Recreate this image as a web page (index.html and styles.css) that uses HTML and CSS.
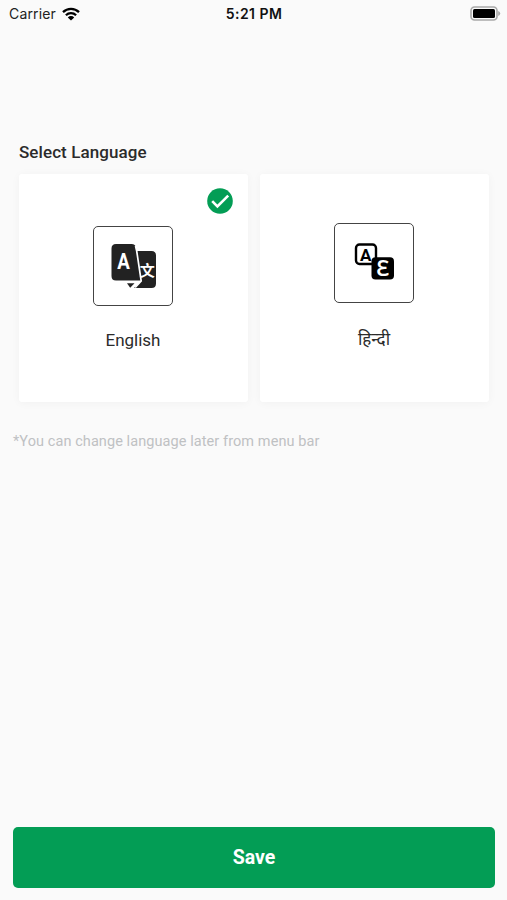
FILE: index.html
```html
<!DOCTYPE html>
<html lang="en">
<head>
    <meta charset="UTF-8">
    <meta name="viewport" content="width=device-width, initial-scale=1.0">
    <title>Select Language</title>
    <link rel="stylesheet" href="styles.css">
</head>
<body>
    <div class="screen">
        <header class="status-bar">
            <div class="carrier">
                <span>Carrier</span>
                <svg class="wifi" viewBox="0 0 18 14" width="18" height="14">
                    <path d="M1 5.2a11.5 11.5 0 0 1 16 0M3.9 8.2a7.3 7.3 0 0 1 10.2 0" fill="none" stroke="#000" stroke-width="2.3"/>
                    <path d="M9 13.6L5.8 10.4a4.5 4.5 0 0 1 6.4 0z"/>
                </svg>
            </div>
            <span class="time">5:21 PM</span>
            <svg class="battery" viewBox="0 0 31 15" width="31" height="15">
                <rect x="1" y="1" width="26" height="13" rx="3.5" fill="#fafafa" stroke="#a9a9a9" stroke-width="1.6"/>
                <rect x="3" y="3" width="22" height="9" rx="1.5"/>
                <path d="M28.2 5v5q2-.8 2-2.500t-2-2.500z" fill="#a9a9a9"/>
            </svg>
        </header>

        <main class="content">
            <h2>Select Language</h2>
            <div class="languages">
                <div class="card">
                    <svg class="check" viewBox="0 0 26 26" width="26" height="26">
                        <circle cx="13" cy="13" r="12.800" fill="#039d55"/>
                        <path d="M5.200 13.200l5.200 5.200L21.200 7.600" fill="none" stroke="#fff" stroke-width="2.600"/>
                    </svg>
                    <div class="icon-box">
                        <svg viewBox="0 0 80 80" width="80" height="80">
                            <path d="M43 25h15.500q4.500 0 4.500 4.500v28q0 4.500-4.500 4.500H41l7-7z" fill="#222"/>
                            <path d="M23 18h15.500q4 0 4.600 4l4.900 32.500H23q-4.500 0-4.500-4.500V22.500q0-4.500 4.500-4.500z" fill="#222"/>
                            <path d="M42.500 20l1.200 5 4.500 30-6 6.500" fill="none" stroke="#fff" stroke-width="1.700"/>
                            <path d="M34 57.300h7.500l-4.300 4.400z" fill="#222"/>
                            <text transform="translate(30.500 42.500) scale(.85 1)" class="glyph glyph-a">A</text>
                            <text x="54.300" y="49.500" class="glyph glyph-wen">文</text>
                        </svg>
                    </div>
                    <p class="name">English</p>
                </div>
                <div class="card card-hindi">
                    <div class="icon-box">
                        <svg viewBox="0 0 80 80" width="80" height="80">
                            <rect x="22" y="21.500" width="20" height="19.500" rx="3.500" fill="#fff" stroke="#000" stroke-width="2.400"/>
                            <text x="31.800" y="37.500" class="glyph glyph-outline">A</text>
                            <rect x="37.500" y="34.200" width="22.500" height="22.300" rx="4"/>
                            <text transform="translate(48.700 53)" class="glyph glyph-e">Ɛ</text>
                        </svg>
                    </div>
                    <p class="name" lang="hi">हिन्दी</p>
                </div>
            </div>
            <p class="note">*You can change language later from menu bar</p>
        </main>

        <button type="button" class="save">Save</button>
    </div>
</body>
</html>
```

FILE: styles.css
```css
* {
    box-sizing: border-box;
}
body {
    margin: 0;
    background-color: #fafafa;
    font-family: Roboto, "Noto Sans", sans-serif;
    color: #2b2b2b;
}
.screen {
    display: flex;
    flex-direction: column;
    height: 900px;
    padding: 0 12px 12px 13px;
}
.status-bar {
    display: grid;
    grid-template-columns: 1fr auto 1fr;
    align-items: center;
    height: 27px;
    margin: 0 -6px 0 -4px;
    font-family: Inter, sans-serif;
    font-size: 14px;
    color: #222;
}
.carrier {
    display: flex;
    align-items: center;
    gap: 6px;
    letter-spacing: 0.15px;
}
.time {
    margin-right: 2px;
    font-weight: 600;
    letter-spacing: 0.45px;
    color: #111;
}
.battery {
    justify-self: end;
}
.content {
    flex: 1;
    padding-top: 115px;
}
h2 {
    margin: 0 6px;
    font-size: 17px;
    font-weight: 500;
    line-height: 20px;
    letter-spacing: 0.08px;
}
.languages {
    display: grid;
    grid-template-columns: 1fr 1fr;
    gap: 12px;
    margin: 12px 6px 0;
}
.card {
    position: relative;
    display: flex;
    flex-direction: column;
    align-items: center;
    height: 228px;
    padding: 52px 1px 0 0;
    background: white;
    border-radius: 3px;
    box-shadow: 0 1px 10px rgba(0,0,0,0.04);
}
.card-hindi {
    padding-top: 49px;
}
.check {
    position: absolute;
    top: 14px;
    right: 15px;
}
.icon-box {
    width: 80px;
    height: 80px;
    border: 1px solid #444;
    border-radius: 5px;
}
.icon-box svg {
    display: block;
    margin: -1px;
}
.glyph {
    fill: white;
    text-anchor: middle;
}
.glyph-a {
    font: 700 22px Roboto, sans-serif;
}
.glyph-wen {
    font: 700 15px "Noto Sans CJK SC", sans-serif;
}
.glyph-outline {
    font: 700 17px Roboto, sans-serif;
    fill: black;
}
.glyph-e {
    font: 600 21px "Noto Sans", sans-serif;
}
.name {
    margin: 24px 0 0;
    font-size: 17px;
    line-height: 20px;
}
.card-hindi .name {
    margin-top: 26px;
}
.note {
    margin: 30px 0 0;
    font-size: 14.5px;
    line-height: 20px;
    letter-spacing: 0.08px;
    color: #bfc1c3;
}
.save {
    height: 61px;
    border: none;
    border-radius: 5px;
    background-color: #039d55;
    color: white;
    font-family: inherit;
    font-size: 19.5px;
    font-weight: 700;
    cursor: pointer;
}
```
